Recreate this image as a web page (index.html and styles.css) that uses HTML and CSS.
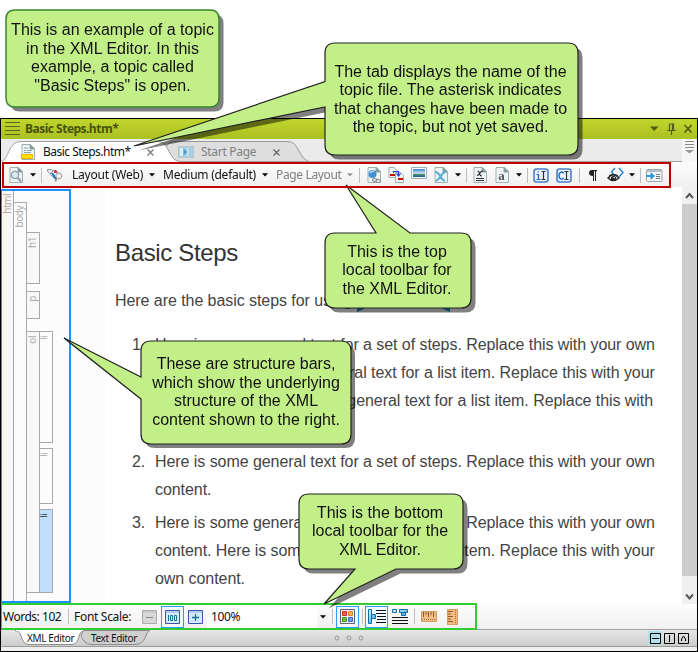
FILE: index.html
```html
<!DOCTYPE html>
<html lang="en">
<head>
<meta charset="utf-8">
<title>XML Editor</title>
<link rel="stylesheet" href="styles.css">
</head>
<body>
<svg class="defs" width="0" height="0" aria-hidden="true">
  <defs>
    <linearGradient id="glass" x1="0" y1="0" x2="1" y2="1"><stop offset="0" stop-color="#e4f8fc"/><stop offset="1" stop-color="#1f9bd0"/></linearGradient>
    <linearGradient id="sky" x1="0" y1="0" x2="0" y2="1"><stop offset="0" stop-color="#3a80d4"/><stop offset=".55" stop-color="#cfeafa"/><stop offset=".6" stop-color="#5c9a72"/><stop offset="1" stop-color="#1c5a96"/></linearGradient>
    <symbol id="page" viewBox="0 0 14 16"><path d="M1 .5h8.500l4 4V15.500H1z" fill="#edf5f5" stroke="#9db1b1"/><path d="M9 .5v4.500h4.500z" fill="#7e9494" stroke="#8fa5a5"/></symbol>
    <symbol id="caret" viewBox="0 0 6 4"><path d="M0 .3h6L3 3.600z" fill="currentColor"/></symbol>
  </defs>
</svg>

<main class="window">
  <header class="titlebar">
    <svg class="grip" width="15" height="14" viewBox="0 0 15 14"><path d="M0 .5h15M0 4.500h15M0 8.500h15M0 12.500h15" stroke="#59651c"/></svg>
    <span class="title">Basic Steps.htm*</span>
    <svg class="win-buttons" width="42" height="12" viewBox="0 0 42 12"><path d="M0 3.500h8.500L4.200 8z" fill="#525c18"/><path d="M19.500 1h4v6M19.500 1v6M17.500 7.500h8M21.500 8v4M22.500 1v6" fill="none" stroke="#525c18" stroke-width="1.200"/><path d="M34.500 2l7 7.500M41.500 2l-7 7.500" stroke="#525c18" stroke-width="1.600"/></svg>
  </header>

  <nav class="tabs">
    <svg class="tab-shapes" width="683" height="23" viewBox="0 0 683 23">
      <path d="M166 6Q168 2.500 174 2.500H286Q292 2.500 295 7L301 17Q305 23 312 23H174Q168 17 165 10z" fill="#dedede" stroke="#9b9b9b"/>
      <path d="M0 22.500C8 21 7 3 19 2.500H157Q162 2.500 165 7L170 16Q173 22.500 180 22.500V24H0z" fill="#fff"/>
      <path d="M0 22.500C8 21 7 3 19 2.500H157Q162 2.500 165 7L170 16Q173 22.500 180 22.500H683" fill="none" stroke="#a3a3a3"/>
    </svg>
    <div class="tab tab-active">
      <svg width="14" height="16" viewBox="0 0 14 16"><use href="#page" width="14" height="16"/><path d="M3 4h4M3 6.500h2M6 6.500h5M3 8.500h7" stroke="#8ba3ad"/><path d="M.5 10.500h11v4H.5z" fill="#fd0" stroke="#f0b400"/></svg>
      <span>Basic Steps.htm*</span>
      <svg class="tab-x" width="7" height="7" viewBox="0 0 7 7"><path d="M.5.5l6 6M6.500.5l-6 6" stroke="#777" stroke-width="1.200"/></svg>
    </div>
    <div class="tab tab-start">
      <svg width="16" height="12" viewBox="0 0 16 12"><path d="M.5.5h15v11H.5z" fill="#a9cfe4" stroke="#b4c4cc"/><path d="M2 2h3v8H2z" fill="#e6eef2"/><path d="M5.500 2.500L9.500 6l-4 3.500z" fill="#4f9cc8"/><path d="M10 1v10" stroke="#d8e8f0"/></svg>
      <span>Start Page</span>
      <svg class="tab-x" width="7" height="7" viewBox="0 0 7 7"><path d="M.5.5l6 6M6.500.5l-6 6" stroke="#666" stroke-width="1.200"/></svg>
    </div>
    <div class="tab-list"><svg width="9" height="13" viewBox="0 0 9 13"><path d="M0 .5h9M0 3.500h9M0 6.500h9" stroke="#888"/><path d="M0 9h9L4.500 12.500z" fill="#999"/></svg></div>
  </nav>

  <div class="toolbar-row">
    <div class="toolbar-top">
      <span class="tool w23"><svg width="14" height="16" viewBox="0 0 14 16"><use href="#page" width="14" height="16"/><circle cx="6" cy="8" r="3.600" fill="#dcecf4" stroke="#8b9aa3" stroke-width="1.300"/><path d="M9 11l3 3.500" stroke="#8b9aa3" stroke-width="2"/></svg></span>
      <span class="drop"><svg width="6" height="4"><use href="#caret"/></svg></span>
      <span class="rule"></span>
      <span class="tool"><svg width="16" height="16" viewBox="0 0 16 16"><path d="M.5 2.500h4l2 2-2 3-4-3z" fill="#e8e8e8" stroke="#999"/><path d="M3 7l4-4 6 4-4 6z" fill="#eef5fa" stroke="#98a4ac"/><path d="M5 6l4 6" stroke="#1678c2" stroke-width="2.200"/><circle cx="8.500" cy="4.500" r="1.600" fill="#d8232a"/><circle cx="11.800" cy="9" r="3" fill="#ececec" stroke="#999"/><path d="M9.500 11.500l-1 3" stroke="#888" stroke-width="1.500"/></svg></span>
      <span class="choice choice-layout">Layout (Web)</span>
      <span class="drop"><svg width="6" height="4"><use href="#caret"/></svg></span>
      <span class="choice choice-medium">Medium (default)</span>
      <span class="drop"><svg width="6" height="4"><use href="#caret"/></svg></span>
      <span class="choice choice-page">Page Layout</span>
      <span class="drop muted"><svg width="6" height="4"><use href="#caret"/></svg></span>
      <span class="rule wide"></span>
      <span class="tool"><svg width="14" height="16" viewBox="0 0 14 16"><use href="#page" width="14" height="16"/><circle cx="5.500" cy="7" r="4" fill="#3f8fd2"/><path d="M3 6q2-2.500 4-1.500" stroke="#b5e0f8" stroke-width="1.500" fill="none"/><rect x="5.500" y="11.500" width="4.500" height="3" rx="1.500" fill="#ddd" stroke="#888"/><rect x="9" y="12.500" width="4.500" height="3" rx="1.500" fill="none" stroke="#888"/></svg></span>
      <span class="tool"><svg width="17" height="16" viewBox="0 0 17 16"><path d="M1 .5h5l3 3v7H1z" fill="#edf5f5" stroke="#9db1b1"/><path d="M7.500 5.500h5l3 3v7h-8z" fill="#edf5f5" stroke="#9db1b1"/><path d="M5.500 6V4.500h5V8M8.500 6.500l2 2.500 2-2.500" stroke="#2340d0" fill="none" stroke-width="1.200"/><path d="M2 8h5M10 12h5" stroke="#d40000" stroke-width="2"/></svg></span>
      <span class="tool w23 picture"><svg width="16" height="12" viewBox="0 0 16 12"><path d="M.5.5h15v11H.5z" fill="#fff" stroke="#9eb0ba"/><path d="M2 2h12v8H2z" fill="url(#sky)"/></svg></span>
      <span class="tool"><svg width="14" height="16" viewBox="0 0 14 16"><use href="#page" width="14" height="16"/><path d="M1 5q3 0 5.500 4.500Q8 13 11 14M12 5q-3 0-5.500 4.500Q4 13 2 14" fill="none" stroke="#5baed0" stroke-width="2"/></svg></span>
      <span class="drop"><svg width="6" height="4"><use href="#caret"/></svg></span>
      <span class="rule"></span>
      <span class="tool"><svg width="14" height="16" viewBox="0 0 14 16"><use href="#page" width="14" height="16"/><path d="M4.500 4q1.500 0 2 2.500T9 9M9.500 4.500Q8 4 7 6T4 8.800" fill="none" stroke="#222" stroke-width="1.100"/><path d="M3 11.500h8M3 13.500h8" stroke="#333"/></svg></span>
      <span class="tool"><svg width="14" height="16" viewBox="0 0 14 16"><use href="#page" width="14" height="16"/><text x="3.200" y="12.500" class="glyph-a">a</text></svg></span>
      <span class="drop"><svg width="6" height="4"><use href="#caret"/></svg></span>
      <span class="rule"></span>
      <span class="tool"><svg width="16" height="15" viewBox="0 0 16 15"><rect x="1" y="1" width="14" height="13" rx="2.500" fill="#e8f2fc" stroke="#4a80cc" stroke-width="1.600"/><path d="M3.500 6.500H5.500V11M3.500 11.500h4M4.500 4h1.500" stroke="#2563b8" stroke-width="1.200" fill="none"/><path d="M8.500 3.500h4M8.500 11.500h4M10.500 3.500v8" stroke="#333" stroke-width="1.200"/></svg></span>
      <span class="tool w24"><svg width="16" height="15" viewBox="0 0 16 15"><rect x="1" y="1" width="14" height="13" rx="2.500" fill="#e8f2fc" stroke="#4a80cc" stroke-width="1.600"/><path d="M7.800 5.200Q6 3.500 4.500 4.300T3 7.500 4.500 10.800t3.300-.8" stroke="#2563b8" stroke-width="1.400" fill="none"/><path d="M8.500 3.500h4M8.500 11.500h4M10.500 3.500v8" stroke="#333" stroke-width="1.200"/></svg></span>
      <span class="rule"></span>
      <span class="tool"><svg width="8" height="11" viewBox="0 0 8 11"><path d="M3 0h5v1.200H7V11H6V1.200H5V11H4V6Q0 6 0 3T3 0z" fill="#222"/></svg></span>
      <span class="tool"><svg width="17" height="17" viewBox="0 0 17 17"><path d="M8 1L4.500 5l2 2M12 1l4 4.500L12 10" fill="none" stroke="#2d8ad0" stroke-width="1.500"/><path d="M1 11Q6 4.500 12 11Q6 16 1 11z" fill="#ddd" stroke="#222" stroke-width="1.300"/><path d="M2 8.500Q6 6 11 8.500" fill="none" stroke="#222"/><circle cx="6.500" cy="11.500" r="2.600" fill="#222"/><circle cx="7.200" cy="10.800" r=".8" fill="#fff"/></svg></span>
      <span class="drop"><svg width="6" height="4"><use href="#caret"/></svg></span>
      <span class="rule"></span>
      <span class="tool"><svg width="17" height="13" viewBox="0 0 17 13"><rect x=".5" y=".5" width="15.500" height="12" rx="1" fill="#f3f5f6" stroke="#9aa5ac"/><path d="M1 2h15" stroke="#b4bec5" stroke-width="2"/><path d="M10 5.500h4M10 7.500h4M10 9.500h4" stroke="#777"/><path d="M0 6h4.500V3L9 7l-4.500 4V8H0z" fill="#2a9ae0"/></svg></span>
    </div>
  </div>

  <section class="workspace">
    <aside class="structure">
      <div class="bar bar-html"><span>html</span></div>
      <div class="bar bar-body"><span>body</span></div>
      <div class="blocks">
        <div class="bar bar-h1"><span>h1</span></div>
        <div class="bar bar-p"><span>p</span></div>
        <div class="list-block">
          <div class="bar bar-ol"><span>ol</span></div>
          <div class="items">
            <div class="bar item item-1"><span>li</span></div>
            <div class="bar item item-2"><span>li</span></div>
            <div class="bar item item-3"><span>li</span></div>
          </div>
        </div>
      </div>
    </aside>
    <div class="gutter"></div>
    <article class="document">
      <h1>Basic Steps</h1>
      <p>Here are the basic steps for using <span class="variable"></span></p>
      <ol>
        <li>Here is some general text for a set of steps. Replace this with your own<br>content. Here is some general text for a list item. Replace this with your<br>own content. Here is some general text for a list item. Replace this with<br>your own content.</li>
        <li>Here is some general text for a set of steps. Replace this with your own<br>content.</li>
        <li>Here is some general text for a set of steps. Replace this with your own<br>content. Here is some general text for a list item. Replace this with your<br>own content.</li>
      </ol>
    </article>
    <div class="scrollbar">
      <svg width="15" height="17" viewBox="0 0 15 17"><path d="M4 11l3.500-4L11 11" fill="none" stroke="#555" stroke-width="2"/></svg>
      <div class="thumb"></div>
      <svg width="15" height="28" viewBox="0 0 15 28"><path d="M4 18.500l3.500 4 3.500-4" fill="none" stroke="#555" stroke-width="2"/></svg>
    </div>
  </section>

  <div class="bottom-row">
    <div class="toolbar-bottom">
      <span class="words">Words: 102</span>
      <span class="rule"></span>
      <span class="scale">Font Scale:</span>
      <span class="tool w23"><svg width="15" height="14" viewBox="0 0 15 14"><path d="M.5.5h14v13H.5z" fill="#d8d8d8" stroke="#aaa"/><path d="M1 2h13" stroke="#bbb"/><path d="M4 7.500h7" stroke="#888"/></svg></span>
      <span class="tool chosen"><svg width="15" height="14" viewBox="0 0 15 14"><path d="M.5.500h14v13H.5z" fill="#d5e9fc" stroke="#3b56a8"/><path d="M1 2h13" stroke="#9ab0dc"/><path d="M3.500 5v6M5.500 5.500h2v5h-2zM9.500 5.500h2v5h-2z" fill="none" stroke="#176f94"/></svg></span>
      <span class="tool w23"><svg width="15" height="14" viewBox="0 0 15 14"><path d="M.5.500h14v13H.5z" fill="#d5e9fc" stroke="#3b56a8"/><path d="M1 2h13" stroke="#9ab0dc"/><path d="M4 7.500h7M7.500 4v7" stroke="#176f94" stroke-width="1.300"/></svg></span>
      <span class="percent">100%</span>
      <span class="drop"><svg width="6" height="4"><use href="#caret"/></svg></span>
      <span class="rule drop-end"></span>
      <span class="tool chosen"><svg width="15" height="15" viewBox="0 0 15 15"><path d="M.5.5h14v14H.5z" fill="#eef0f6" stroke="#5a6478"/><path d="M2.500 2.500h4v4h-4z" fill="#f05a50" stroke="#c83830"/><path d="M8.500 2.500h4v4h-4z" fill="#f8b73c" stroke="#d09020"/><path d="M2.500 8.500h4v4h-4z" fill="#6cc04a" stroke="#459428"/><path d="M8.500 8.500h4v4h-4z" fill="#6a9cf0" stroke="#3d6cc8"/></svg></span>
      <span class="rule"></span>
      <span class="tool chosen"><svg width="18" height="15" viewBox="0 0 18 15"><path d="M.5.5h3v14h-3zM3.500 5.500h4v4h-4z" fill="url(#glass)" stroke="#126fa6"/><path d="M8 1.500h10M8 4.500h10M9 7.500h9M9 10.500h9M8 13.500h10" stroke="#111"/></svg></span>
      <span class="tool w23"><svg width="16" height="15" viewBox="0 0 16 15"><path d="M.5.500h4v3h-4zM7.500.500h8v3h-8zM9.500 3.500h4v3h-4z" fill="url(#glass)" stroke="#126fa6"/><path d="M0 8.500h16M0 11.500h16M0 14.500h16" stroke="#111"/></svg></span>
      <span class="rule"></span>
      <span class="tool w23"><svg width="16" height="11" viewBox="0 0 16 11"><path d="M.5.500h15v10H.5z" fill="#f2bd84" stroke="#d79a60"/><path d="M2.500 1v5M5 1v3M7.500 1v5M10 1v3M12.500 1v5" stroke="#8d5a2a"/><path d="M1 8.500h14" stroke="#a86e38" stroke-dasharray="1 1"/></svg></span>
      <span class="tool w24"><svg width="11" height="16" viewBox="0 0 11 16"><path d="M.5.500h10v15H.5z" fill="#f2bd84" stroke="#d79a60"/><path d="M1 2.500h5M1 5h3M1 7.500h5M1 10h3M1 12.500h5" stroke="#8d5a2a"/><path d="M8.500 1v14" stroke="#a86e38" stroke-dasharray="1 1"/></svg></span>
    </div>
  </div>

  <footer class="view-tabs">
    <svg class="view-shapes" width="160" height="17" viewBox="0 0 160 17">
      <path d="M82 .5h67C144 1 146 14.500 134 14.500H90Q83 14 80 6z" fill="#cfcfcf" stroke="#8c8c8c"/>
      <path d="M14 .5C23 1 18 14 28 14.500H71C80 14 76 1 83 .5z" fill="#fff" stroke="#8c8c8c"/>
      <path d="M15 .5h67" stroke="#fff"/>
    </svg>
    <span class="view view-xml">XML Editor</span>
    <span class="view view-text">Text Editor</span>
    <svg class="dots" width="30" height="6" viewBox="0 0 30 6"><g fill="#d8d8d8" stroke="#999"><circle cx="3" cy="3" r="2"/><circle cx="15" cy="3" r="2"/><circle cx="27" cy="3" r="2"/></g></svg>
    <svg class="splits" width="42" height="14" viewBox="0 0 42 14"><path d="M0 0h14v14H0z" fill="#b3dfe8"/><path d="M2.500 2.500h10v10h-10zM16.500 2.500h10v10h-10zM30.500 2.500h10v10h-10z" fill="none" stroke="#000"/><path d="M4 7.500h7M21.500 4v7M33.500 10V8l2-3 2 3v2" fill="none" stroke="#000"/></svg>
  </footer>
</main>

<svg class="callout-shapes" width="698" height="652" viewBox="0 0 698 652">
  <defs>
    <path id="c1" d="M15 10H210Q219 10 219 19V98Q219 107 210 107H15Q6 107 6 98V19Q6 10 15 10z"/>
    <path id="c2" d="M335 43H568Q578 43 578 53V145Q578 155 568 155H335Q325 155 325 145V107L134 146 325 81.500V53Q325 43 335 43z"/>
    <path id="c3" d="M335 233H376L346 185 410 233H461Q471 233 471 243V298Q471 308 461 308H335Q325 308 325 298V243Q325 233 335 233z"/>
    <path id="c4" d="M151 341H341Q351 341 351 351V434Q351 444 341 444H151Q141 444 141 434V399L64 338 141 377V351Q141 341 151 341z"/>
    <path id="c5" d="M309 494H453Q463 494 463 504V559Q463 569 453 569H396L324 604 355 569H309Q299 569 299 559V504Q299 494 309 494z"/>
  </defs>
  <g class="shade">
    <use href="#c1" x="4.500" y="4.500"/><use href="#c2" x="4.500" y="4.500"/><use href="#c3" x="4.500" y="4.500"/><use href="#c4" x="4" y="4"/><use href="#c5" x="4.500" y="4.500"/>
  </g>
  <g class="bubbles">
    <use href="#c1" class="first"/><use href="#c2"/><use href="#c3"/><use href="#c4"/><use href="#c5"/>
  </g>
</svg>
<div class="note note-1">This is an example of a topic<br>in the XML Editor. In this<br>example, a topic called<br>"Basic Steps" is open.</div>
<div class="note note-2">The tab displays the name of the<br>topic file. The asterisk indicates<br>that changes have been made to<br>the topic, but not yet saved.</div>
<div class="note note-3">This is the top<br>local toolbar for<br>the XML Editor.</div>
<div class="note note-4">These are structure bars,<br>which show the underlying<br>structure of the XML<br>content shown to the right.</div>
<div class="note note-5">This is the bottom<br>local toolbar for the<br>XML Editor.</div>
</body>
</html>
```
FILE: styles.css
```css
* { box-sizing: border-box; }
html, body { margin: 0; background: #fff; }
body { position: relative; width: 698px; height: 652px; overflow: hidden; padding-top: 118px; font: 12px/16px "Noto Sans", "Open Sans", sans-serif; color: #111; }
svg { display: block; flex: none; }
.defs { position: absolute; }
.window { height: 534px; border: 1px solid #000; display: flex; flex-direction: column; overflow: hidden; width: 698px; background: #f0f0f0; }

.titlebar { height: 20px; flex: none; display: flex; align-items: center; background: linear-gradient(#c0d62d, #abc022); }
.grip { margin-left: 4px; }
.title { margin-left: 5px; font: bold 12px/16px "Open Sans", sans-serif; letter-spacing: -.52px; color: #48520f; }
.win-buttons { margin-left: auto; margin-right: 5px; }

.tabs { position: relative; height: 23px; flex: none; display: flex; background: #ebebeb; }
.tab-shapes { position: absolute; left: 0; top: 0; }
.tab { position: relative; display: flex; align-items: center; height: 23px; padding-top: 3px; }
.tab-active { width: 166px; padding-left: 20px; }
.tab-active span { margin-left: 8px; width: 104px; letter-spacing: -.52px; white-space: nowrap; }
.tab-start { padding-left: 11px; width: 150px; color: #808080; }
.tab-start span { margin-left: 7px; width: 72px; letter-spacing: -.3px; white-space: nowrap; }
.tab-list { margin-left: auto; position: relative; width: 15px; height: 23px; padding: 2px 0 0 3px; background: #f6f6f6; }

.toolbar-row { height: 25px; flex: none; background: linear-gradient(#fdfdfd, #f0f0f0); }
.toolbar-top { position: relative; width: 669px; height: 26px; margin-left: 1px; border: 2px solid #c00000; display: flex; align-items: center; z-index: 1; }
.tool { width: 22px; height: 22px; flex: none; display: flex; align-items: center; justify-content: center; }
.w23 { width: 23px; }
.w24 { width: 24px; }
.picture { padding-bottom: 4px; }
.drop { width: 11px; flex: none; display: flex; justify-content: center; color: #000; }
.muted { color: #999; }
.rule { width: 6px; flex: none; display: flex; justify-content: center; }
.rule.wide { width: 8px; }
.rule::before { content: ""; width: 1px; height: 15px; background: #bdbdbd; }
.choice { flex: none; padding-left: 6px; white-space: nowrap; letter-spacing: -.2px; }
.choice-layout { width: 80px; }
.choice-medium { width: 102px; letter-spacing: -.25px; }
.choice-page { width: 74px; color: #808080; letter-spacing: -.35px; }
.glyph-a { font: bold 13px "Liberation Serif", serif; fill: #555; }

.workspace { height: 417px; flex: none; display: flex; background: #fff; }
.structure { width: 70px; height: 414px; margin-top: 2px; border: 2px solid #1e90ff; border-left-width: 1px; display: flex; background: #fcfcfc; }
.bar { width: 14px; flex: none; border: 1px solid #a9a9a9; background: #f8f8f8; color: #aaa; }
.bar span { display: block; writing-mode: vertical-rl; transform: rotate(180deg); font-size: 10px; line-height: 10px; letter-spacing: -.5px; }
.bar-html { width: 12px; border-width: 0 1px 0 0; padding-top: 3px; }
.bar-body { height: 399px; margin-top: 11px; width: 13px; border-width: 1px 1px 0 0; background: #fcfcfc; padding-top: 3px; }
.blocks { padding-top: 41px; }
.bar-h1, .bar-p { border-left: 0; width: 13px; padding-top: 4px; }
.bar-h1 { height: 52px; }
.bar-p { height: 28px; margin-top: 7px; }
.list-block { display: flex; margin-top: 12px; height: 262px; }
.bar-ol { width: 13px; border-left: 0; padding-top: 4px; }
.items { display: flex; flex-direction: column; }
.item { width: 13px; border-left: 0; padding-top: 4px; background: #fcfcfc; }
.item span { font-size: 9px; line-height: 8px; }
.item-1 { height: 112px; }
.item-2 { height: 56px; margin-top: 5px; }
.item-3 { height: 84px; margin-top: 5px; background: #c1e0ff; color: #333; }
.gutter { width: 34px; background: #fcfcfc; }
.document { flex: 1; padding-left: 10px; font: 16px/28px "Liberation Sans", Arial, sans-serif; letter-spacing: -.06px; color: #444; white-space: nowrap; }
.document h1 { margin: 52px 0 0; font-size: 24px; line-height: 28px; font-weight: normal; letter-spacing: -.35px; color: #333; }
.document p { margin: 20px 0 0; height: 28px; }
.document ol { margin: 16px 0 0; padding-left: 40px; list-style: none; counter-reset: step; }
.document li { margin-bottom: 5px; counter-increment: step; }
.document li::before { content: counter(step) "."; display: inline-block; width: 23px; margin-left: -23px; }
.variable { display: inline-block; width: 93px; height: 8px; border: solid #1f8bbd; border-width: 0 7px 3px; border-bottom-color: #eee; vertical-align: -6px; }
.scrollbar { width: 15px; background: #f0f0f0; display: flex; flex-direction: column; }
.thumb { height: 372px; background: #cdcdcd; }

.bottom-row { height: 26px; flex: none; background: linear-gradient(#fdfdfd, #f0f0f0); border-bottom: 1px solid #a0a0a0; }
.toolbar-bottom { position: relative; width: 477px; height: 27px; margin: -1px 0 0 -1px; border: 2px solid #32cd32; display: flex; align-items: center; }
.words { width: 63px; padding-left: 1px; letter-spacing: -.48px; white-space: nowrap; }
.scale { width: 67px; padding-left: 3px; letter-spacing: -.3px; white-space: nowrap; }
.chosen { width: 23px; height: 22px; border: 1px solid #3399ff; background: #f3f9ff; }
.percent { width: 110px; padding-left: 4px; height: 22px; line-height: 22px; background: #fff; letter-spacing: -.4px; }
.rule.drop-end { width: 8px; }

.view-tabs { position: relative; height: 17px; flex: none; display: flex; align-items: center; background: linear-gradient(#e6e6e6, #cdcdcd); border-bottom: 1px solid #999; font-size: 10px; }
.view-shapes { position: absolute; left: 0; top: 0; }
.view { position: relative; line-height: 14px; letter-spacing: -.36px; white-space: nowrap; }
.view-xml { margin-left: 26px; width: 64px; }
.view-text { width: 60px; }
.dots { margin-left: 183px; }
.splits { margin-left: auto; margin-right: 7px; }

.callout-shapes { position: absolute; left: 0; top: 0; }
.shade { fill: #000; opacity: .5; }
.bubbles { fill: #c3ef88; stroke: #222; stroke-width: 1.200; }
.first { stroke: #37852c; stroke-width: 1.500; }
.note { position: absolute; font: 16px/18.400px "Liberation Sans", Arial, sans-serif; text-align: center; color: #111; white-space: nowrap; }
.note-1 { left: 6px; top: 21.400px; width: 213px; }
.note-2 { left: 324px; top: 63px; width: 253px; }
.note-3 { left: 324px; top: 243px; width: 146px; }
.note-4 { left: 141px; top: 355.400px; width: 210px; }
.note-5 { left: 298px; top: 504px; width: 164px; }
```
